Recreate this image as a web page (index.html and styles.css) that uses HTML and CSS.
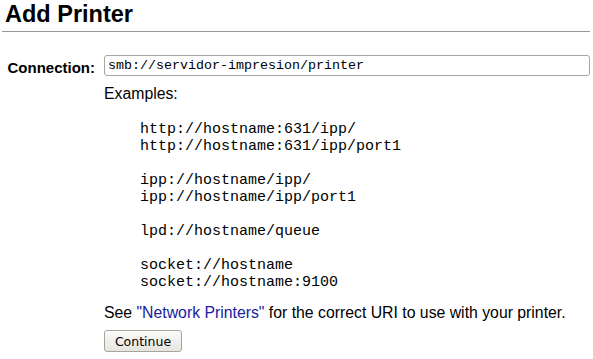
FILE: index.html
```
<!DOCTYPE html>
<html><head><meta charset="utf-8"/>
<title>Add Printer</title>
<link rel="stylesheet" href="styles.css">
</head>
<body>

<h2 class="title">Add Printer</h2>

<form class="addform">
<div class="row">
<div class="label">Connection:</div>
<div class="field"><input class="uri" type="text" value="smb://servidor-impresion/printer"></div>
</div>
<div class="row">
<div></div>
<div class="field">
<div class="examples">Examples:</div>
<pre class="samples">    http://hostname:631/ipp/
    http://hostname:631/ipp/port1

    ipp://hostname/ipp/
    ipp://hostname/ipp/port1

    lpd://hostname/queue

    socket://hostname
    socket://hostname:9100</pre>
<p class="hint">See <a href="#">"Network Printers"</a> for the correct URI to use with your printer.</p>
</div>
</div>
<div class="row">
<div></div>
<div class="field"><button class="btn" type="button">Continue</button></div>
</div>
</form>

</body>
</html>
```
FILE: styles.css
```
body {
  font-family: "Liberation Sans", Arial, sans-serif;
  font-size: 15.8px;
  margin: 0;
  padding: 0 3px 0 2px;
  color: #000;
}
.title {
  margin: 0;
  padding: 3px 3px 5px;
  font-size: 23.5px;
  font-weight: bold;
  line-height: 23px;
  border-bottom: 1px solid #999;
}
.addform {
  margin-top: 23px;
}
.row {
  display: grid;
  grid-template-columns: 93px 1fr;
  column-gap: 9px;
}
.label {
  font-weight: bold;
  text-align: right;
  padding-top: 4px;
  font-size: 15px;
}
.uri {
  box-sizing: border-box;
  width: 100%;
  height: 21px;
  border: 1px solid #aaa69e;
  border-radius: 3px;
  padding: 1px 3px;
  font-family: "Liberation Mono", "Courier New", monospace;
  font-size: 13.33px;
  background: #fff;
}
.examples {
  margin-top: 9px;
  line-height: 18px;
}
.samples {
  font-family: "Liberation Mono", "Courier New", monospace;
  font-size: 15px;
  line-height: 17px;
  margin: 18px 0 13px;
}
.hint {
  margin: 0;
  line-height: 18px;
}
.hint a {
  color: #2020a0;
  text-decoration: none;
}
.btn {
  margin-top: 8px;
  font-family: "DejaVu Sans", sans-serif;
  font-size: 12.5px;
  height: 22px;
  width: 78px;
  padding: 0;
  border: 1px solid #a8a49c;
  border-radius: 3px;
  background: linear-gradient(#fbfbfa, #e6e4df);
  color: #000;
}
```
